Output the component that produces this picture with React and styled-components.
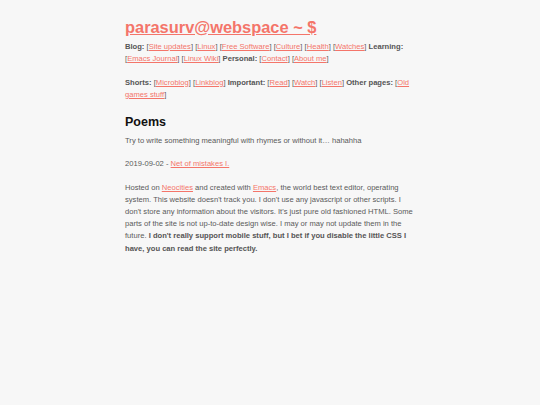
import React from "react";
import styled, { createGlobalStyle } from "styled-components";

const GlobalStyle = createGlobalStyle`
  html, body {
    margin: 0;
    padding: 0;
    background: #f7f7f7;
  }
  body {
    font-family: "Liberation Sans", Arial, sans-serif;
    color: #5a5a5a;
  }
`;

const Page = styled.div`
  width: 290px;
  margin: 0 auto;
  padding-top: 15.5px;
  font-size: 7.6px;
  line-height: 1.6;
`;

const Title = styled.h1`
  margin: 0 0 3px;
  font-size: 16.4px;
  line-height: 22px;
  font-weight: bold;
  a {
    color: #f4756a;
  }
`;

const Nav = styled.p`
  margin: 0 0 12px;
`;

const Label = styled.b`
  color: #555;
`;

const Link = styled.a`
  color: #f4756a;
  text-decoration: underline;
`;

const Heading = styled.h2`
  margin: 12px 0 3.5px;
  font-size: 12.5px;
  line-height: 18px;
  color: #111;
`;

const Text = styled.p`
  margin: 0 0 11.5px;
`;

const Strong = styled.b`
  color: #555;
`;

const L = ({ children }) => (
  <>
    [<Link href="#">{children}</Link>]
  </>
);

export default function App() {
  return (
    <>
      <GlobalStyle />
      <Page>
        <Title>
          <a href="#">parasurv@webspace ~ $</a>
        </Title>
        <Nav>
          <Label>Blog:</Label> <L>Site updates</L> <L>Linux</L>{" "}
          <L>Free Software</L> <L>Culture</L> <L>Health</L> <L>Watches</L>{" "}
          <Label>Learning:</Label> <L>Emacs Journal</L> <L>Linux Wiki</L>{" "}
          <Label>Personal:</Label> <L>Contact</L> <L>About me</L>
        </Nav>
        <Nav>
          <Label>Shorts:</Label> <L>Microblog</L> <L>Linkblog</L>{" "}
          <Label>Important:</Label> <L>Read</L> <L>Watch</L> <L>Listen</L>{" "}
          <Label>Other pages:</Label> <L>Old games stuff</L>
        </Nav>
        <Heading>Poems</Heading>
        <Text>Try to write something meaningful with rhymes or without it… hahahha</Text>
        <Text>
          2019-09-02 - <Link href="#">Net of mistakes I.</Link>
        </Text>
        <Text>
          Hosted on <Link href="#">Neocities</Link> and created with{" "}
          <Link href="#">Emacs</Link>, the world best text editor, operating
          system. This website doesn't track you. I don't use any javascript or
          other scripts. I don't store any information about the visitors. It's
          just pure old fashioned HTML. Some parts of the site is not up-to-date
          design wise. I may or may not update them in the future.{" "}
          <Strong>
            I don't really support mobile stuff, but I bet if you disable the
            little CSS I have, you can read the site perfectly.
          </Strong>
        </Text>
      </Page>
    </>
  );
}
